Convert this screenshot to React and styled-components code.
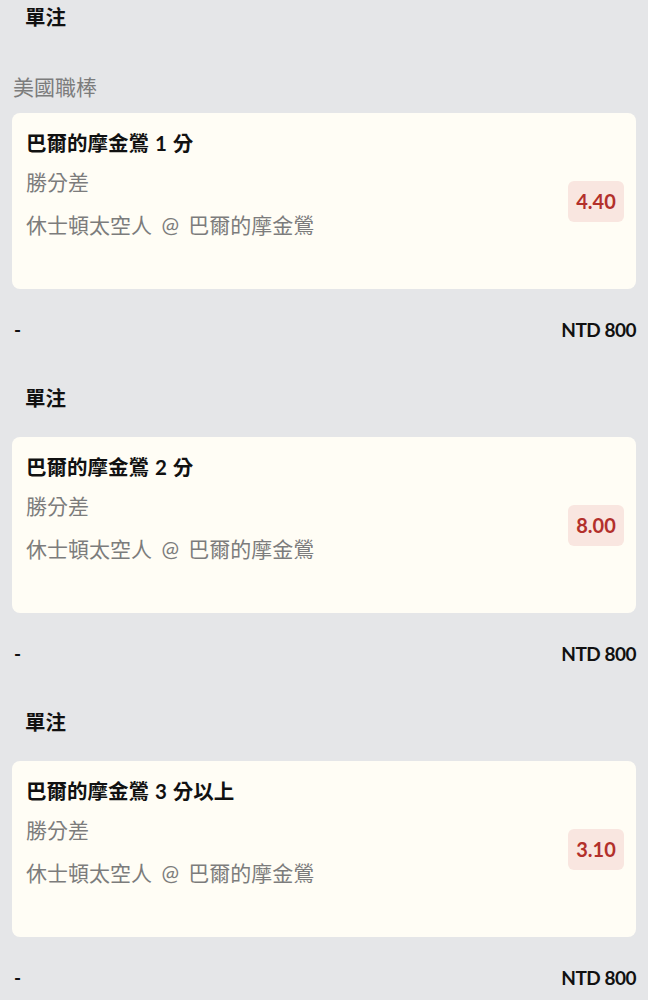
import React from 'react';
import styled, { createGlobalStyle } from 'styled-components';

const GlobalStyle = createGlobalStyle`
    html, body {
        margin: 0;
        padding: 0;
        background-color: #e5e6e8;
    }
    body {
        font-family: "Lato", "Noto Sans CJK TC", sans-serif;
        color: #111;
    }
`;

const Page = styled.div`
    display: flex;
    flex-direction: column;
    padding: 3px 12px 0;
`;

const Section = styled.section`
    display: flex;
    flex-direction: column;
    margin-bottom: 40px;
`;

const BetType = styled.div`
    padding-left: 13px;
    font-size: 20.5px;
    line-height: 28px;
    font-weight: 700;
`;

const League = styled.div`
    margin-top: 42px;
    padding-left: 1px;
    font-size: 21px;
    line-height: 28px;
    color: #7c7c7c;
`;

const Card = styled.div`
    display: flex;
    align-items: center;
    justify-content: space-between;
    margin-top: ${props => (props.$withLeague ? '12px' : '25px')};
    padding: 16px 12px 50px 14px;
    background-color: #fffdf5;
    border-radius: 8px;
`;

const Info = styled.div`
    display: flex;
    flex-direction: column;
`;

const Selection = styled.div`
    font-size: 20.5px;
    line-height: 28px;
    font-weight: 700;
    color: #111;
    word-spacing: 1px;
`;

const Market = styled.div`
    margin-top: 11px;
    font-size: 21px;
    line-height: 28px;
    color: #7c7c7c;
`;

const Match = styled.div`
    margin-top: 15px;
    font-size: 21px;
    line-height: 28px;
    color: #7c7c7c;
    word-spacing: 4px;
`;

const Odds = styled.div`
    align-self: center;
    margin-top: 34px;
    width: 56px;
    height: 41px;
    display: flex;
    align-items: center;
    justify-content: center;
    background-color: #f9e6e0;
    border-radius: 6px;
    color: #b3302b;
    font-size: 20px;
    font-weight: 700;
`;

const Footer = styled.div`
    display: flex;
    justify-content: space-between;
    margin-top: 27px;
    padding-left: 2px;
    font-size: 19px;
    line-height: 28px;
    font-weight: 700;
    letter-spacing: -0.5px;
`;

const bets = [
    { title: '巴爾的摩金鶯 1 分', odds: '4.40' },
    { title: '巴爾的摩金鶯 2 分', odds: '8.00' },
    { title: '巴爾的摩金鶯 3 分以上', odds: '3.10' },
];

const App = () => {
    return (
        <>
            <GlobalStyle />
            <Page>
                {bets.map((bet, i) => (
                    <Section key={bet.title}>
                        <BetType>單注</BetType>
                        {i === 0 && <League>美國職棒</League>}
                        <Card $withLeague={i === 0}>
                            <Info>
                                <Selection>{bet.title}</Selection>
                                <Market>勝分差</Market>
                                <Match>休士頓太空人 @ 巴爾的摩金鶯</Match>
                            </Info>
                            <Odds>{bet.odds}</Odds>
                        </Card>
                        <Footer>
                            <span>-</span>
                            <span>NTD 800</span>
                        </Footer>
                    </Section>
                ))}
            </Page>
        </>
    );
};

export default App;
